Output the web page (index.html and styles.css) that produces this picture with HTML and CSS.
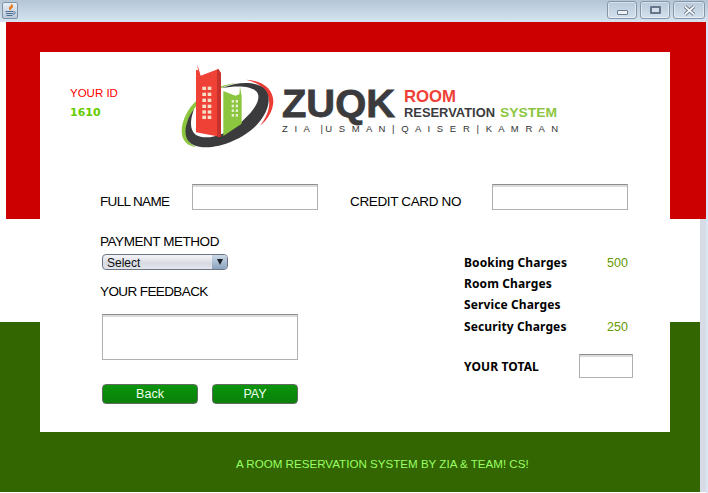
FILE: index.html
```html
<!DOCTYPE html>
<html lang="en">
<head>
<meta charset="utf-8">
<title>Room Reservation</title>
<link rel="stylesheet" href="styles.css">
</head>
<body>
<div class="window">
  <header class="titlebar">
    <div class="app-icon">
      <svg width="14" height="15" viewBox="0 0 14 15">
        <path d="M8 0.500C9.500 2.500 5.500 3.500 6 5.800 6.200 6.800 6.800 7.300 7.500 7.800 6.700 6.200 10.500 5.200 10 3 9.700 2 9 1 8 0.500Z" fill="#e8791e"/>
        <path d="M2.500 8.500h8M3 10.500h7M3.500 12.500h6" stroke="#4a6f96" stroke-width="1.200" fill="none"/>
        <path d="M10.500 8.800c2.500-.5 2.500 2-.5 2.500" stroke="#4a6f96" fill="none"/>
      </svg>
    </div>
    <div class="win-buttons">
      <div class="win-btn"><span class="glyph-min"></span></div>
      <div class="win-btn"><span class="glyph-max"></span></div>
      <div class="win-btn win-btn-close">
        <svg width="13" height="11" viewBox="0 0 13 11"><path d="M2 1.500L11 9.500M11 1.500L2 9.500" stroke="#5d6b7c" stroke-width="3.600"/><path d="M2 1.500L11 9.500M11 1.500L2 9.500" stroke="#f4f6f8" stroke-width="1.800"/></svg>
      </div>
    </div>
  </header>
  <main class="stage">
    <div class="band-red"></div>
    <div class="band-mid"></div>
    <div class="band-green">
      <p class="footer-text">A ROOM RESERVATION SYSTEM BY ZIA &amp; TEAM! CS!</p>
    </div>
    <section class="card">
      <div class="card-head">
        <div class="your-id">
          <div class="id-label">YOUR ID</div>
          <div class="id-value">1610</div>
        </div>
        <svg class="logo" width="395" height="105" viewBox="0 0 395 105">
          <g transform="scale(0.33333)">
            <path d="M200 84C130 92 60 130 38 205 28 245 42 272 80 277 50 265 42 235 55 195 75 140 130 100 200 84Z" fill="#8cc63f"/>
            <path d="M228 74C275 76 310 100 310 140 308 170 292 195 270 212 292 185 302 155 296 128 288 100 262 82 228 74Z" fill="#ec3b35"/>
            <path d="M155 100C205 78 262 78 286 104 306 128 296 170 262 208 222 250 150 282 92 276 50 270 38 240 52 200 56 188 62 174 72 163 60 195 58 225 78 240 110 258 170 240 215 200 255 165 278 128 258 108 238 92 195 92 155 100Z" fill="#3b3b3d"/>
            <path d="M78 45L84 46 82 28 92 62 145 42 153 55V246L78 232Z" fill="#ef4136"/>
            <path d="M145 42L153 55V246H141V44Z" fill="#c8322c"/>
            <path d="M160 108L196 122 208 118 210 95 215 122V206L160 243Z" fill="#8cc63f"/>
            <g fill="#f6dfc6">
              <rect x="97" y="95" width="11" height="10"/><rect x="113" y="95" width="11" height="10"/>
              <rect x="97" y="113" width="11" height="10"/><rect x="113" y="113" width="11" height="10"/>
              <rect x="97" y="131" width="11" height="10"/><rect x="113" y="131" width="11" height="10"/>
              <rect x="97" y="149" width="11" height="10"/><rect x="113" y="149" width="11" height="10"/>
              <rect x="97" y="166" width="11" height="10"/><rect x="113" y="166" width="11" height="10"/>
              <rect x="97" y="182" width="11" height="10"/><rect x="113" y="182" width="11" height="10"/>
            </g>
            <g fill="#e3f0cf">
              <rect x="185" y="135" width="7" height="8"/><rect x="197" y="135" width="7" height="8"/>
              <rect x="185" y="149" width="7" height="8"/><rect x="197" y="149" width="7" height="8"/>
              <rect x="185" y="163" width="7" height="8"/><rect x="197" y="163" width="7" height="8"/>
              <rect x="185" y="177" width="7" height="8"/><rect x="197" y="177" width="7" height="8"/>
            </g>
          </g>
          <text class="logo-zuqk" x="112" y="62" textLength="113" lengthAdjust="spacingAndGlyphs">ZUQK</text>
          <text class="logo-room" x="234" y="47" textLength="52" lengthAdjust="spacingAndGlyphs">ROOM</text>
          <text class="logo-res" x="234" y="62" textLength="91" lengthAdjust="spacingAndGlyphs">RESERVATION</text>
          <text class="logo-sys" x="330" y="62" textLength="57" lengthAdjust="spacingAndGlyphs">SYSTEM</text>
          <text class="logo-tag" x="112" y="77" textLength="276">Z I A  |U S M A N | Q A I S E R | K A M R A N</text>
        </svg>
      </div>
      <div class="row-top">
        <label class="field-label label-name">FULL NAME</label>
        <input class="text-input input-name" type="text">
        <label class="field-label label-card">CREDIT CARD NO</label>
        <input class="text-input input-card" type="text">
      </div>
      <div class="card-body">
        <div class="col-left">
          <div class="field-label label-pay">PAYMENT METHOD</div>
          <div class="select">
            <span class="select-text">Select</span>
            <span class="select-arrow"></span>
          </div>
          <div class="field-label label-feedback">YOUR FEEDBACK</div>
          <textarea class="text-input feedback"></textarea>
          <div class="actions">
            <button class="btn btn-back" type="button">Back</button>
            <button class="btn btn-pay" type="button">PAY</button>
          </div>
        </div>
        <div class="col-right">
          <div class="charge"><span class="charge-name">Booking Charges</span><span class="charge-val">500</span></div>
          <div class="charge"><span class="charge-name">Room Charges</span></div>
          <div class="charge"><span class="charge-name">Service Charges</span></div>
          <div class="charge charge-last"><span class="charge-name">Security Charges</span><span class="charge-val">250</span></div>
          <div class="total">
            <span class="charge-name total-name">YOUR TOTAL</span>
            <input class="text-input total-input" type="text">
          </div>
        </div>
      </div>
    </section>
  </main>
</div>
</body>
</html>
```
FILE: styles.css
```css
* { box-sizing: border-box; }
html, body { margin: 0; padding: 0; background: #fff; }
body { width: 708px; height: 493px; overflow: hidden; font-family: "Liberation Sans", Arial, sans-serif; }

.window { width: 708px; height: 493px; display: flex; flex-direction: column; background: #fff; }

.titlebar {
  height: 22px; flex: none; display: flex; justify-content: space-between;
  padding: 1px 3px 0 2px;
  background: linear-gradient(#b4c5d6, #d6e4f0);
}
.app-icon {
  width: 16px; height: 17px; border: 1px solid #7f93a8; border-radius: 2px;
  background: linear-gradient(#e8eef4, #b9c9da); margin-top: 1px; display: flex; overflow: hidden;
}
.win-buttons { display: flex; gap: 3px; }
.win-btn {
  width: 30px; height: 18px; border: 1px solid #8596aa; border-radius: 3px;
  background: linear-gradient(#b9cadb, #d3e0ec);
  display: flex; align-items: center; justify-content: center;
  box-shadow: inset 0 0 0 1px rgba(255,255,255,.45);
}
.win-btn-close { width: 32px; }
.glyph-min { width: 11px; height: 5px; margin-top: 5px; background: #eef1f5; border: 1px solid #6b7a8c; border-radius: 1px; }
.glyph-max { width: 11px; height: 8px; border: 2px solid #66758a; border-radius: 1px; background: #d3deea; }

.stage { position: relative; flex: 1; display: flex; flex-direction: column;
  background: linear-gradient(90deg, transparent 706px, #d9e7f5 706px); }
.band-red { height: 197px; margin-left: 6px; width: 700px; background: #cc0000; flex: none; }
.band-mid { height: 103px; flex: none; width: 706px; background: linear-gradient(90deg, #fff 700px, #d6dbe6 700px); }
.band-green { flex: 1; display: flex; margin-bottom: 1px;
  background: linear-gradient(90deg, #336600 700px, #d6dbe6 700px, #d6dbe6 706px, transparent 706px); }
.footer-text { margin: 135px 0 0 236px; font-size: 11.600px; line-height: 14px; color: #99ff66; white-space: nowrap; }

.card { position: absolute; left: 40px; top: 30px; width: 630px; height: 380px; background: #fff; }

.card-head { height: 132px; display: flex; }
.your-id { width: 130px; padding: 33px 0 0 30px; font-size: 11.500px; line-height: 16px; }
.id-label { color: #ff0000; }
.id-value { color: #66cc00; font-weight: 700; margin-top: 4px; font-family: "DejaVu Sans", sans-serif; font-size: 11px; }
.logo { display: block; flex: none; margin-top: 3px; }
.logo-zuqk { font: 700 38px "Liberation Sans", sans-serif; fill: #3b3b3d; stroke: #3b3b3d; stroke-width: .8px; }
.logo-room { font: 700 17px "Liberation Sans", sans-serif; fill: #ef4136; }
.logo-res { font: 700 13px "Liberation Sans", sans-serif; fill: #3b3b3d; }
.logo-sys { font: 700 13px "Liberation Sans", sans-serif; fill: #8cc63f; }
.logo-tag { font: 400 9.500px "Liberation Sans", sans-serif; fill: #333; white-space: pre; }

.field-label { font-size: 13.500px; line-height: 16px; color: #000; white-space: nowrap; letter-spacing: -.45px; }
.text-input {
  display: block; border: 1px solid #b0b0b0; border-top-color: #8e8e8e; background: #fff;
  box-shadow: inset 0 2px 0 #dcdcdc; border-radius: 0; padding: 0; margin: 0; resize: none; outline: none;
}
.row-top { display: flex; height: 26px; align-items: flex-start; }
.label-name { width: 92px; margin: 10px 0 0 60px; letter-spacing: -.65px; }
.input-name { width: 126px; height: 26px; }
.label-card { width: 142px; margin: 10px 0 0 32px; letter-spacing: -.35px; }
.input-card { width: 136px; height: 26px; }

.card-body { display: flex; }
.col-left { width: 424px; padding-left: 60px; flex: none; }
.label-pay { margin-top: 24px; }
.select {
  margin: 4px 0 0 2px; width: 126px; height: 16px; display: flex; justify-content: space-between;
  border: 1px solid #6d7684; border-radius: 4px; overflow: hidden;
  background: linear-gradient(#f4f5f8, #d7dae2 60%, #e4e6ec);
}
.select-text { font-size: 12px; line-height: 16px; padding-left: 4px; color: #111; }
.select-arrow {
  width: 15px;
  background: linear-gradient(#cbd8e6, #8ba4bf);
  display: flex; align-items: center; justify-content: center;
}
.select-arrow::after {
  content: ""; border-left: 3.500px solid transparent; border-right: 3.500px solid transparent;
  border-top: 6px solid #1c2026;
}
.label-feedback { margin-top: 14px; letter-spacing: -.6px; }
.feedback { margin: 14px 0 0 2px; width: 196px; height: 46px; }
.actions { display: flex; gap: 14px; margin: 24px 0 0 2px; }
.btn {
  height: 20px; padding: 0; border: 1px solid #5f6b5f; border-radius: 4px; color: #f2fff2;
  font: 400 12.500px "Liberation Sans", sans-serif;
  background: linear-gradient(#0c950c, #088a08 50%, #0d7f0d);
}
.btn-back { width: 96px; }
.btn-pay { width: 86px; }

.col-right { padding-top: 42px; flex: none; }
.charge { display: flex; height: 21px; align-items: center; }
.charge-last { height: 22px; padding-top: 1px; }
.charge-name { width: 143px; font: 700 12px "Noto Sans", sans-serif; letter-spacing: .12px; color: #000; white-space: nowrap; }
.charge-val { font-size: 12.500px; color: #669900; }
.total { display: flex; align-items: center; margin-top: 17px; }
.total-name { width: 115px; }
.total-input { width: 54px; height: 24px; }
```
